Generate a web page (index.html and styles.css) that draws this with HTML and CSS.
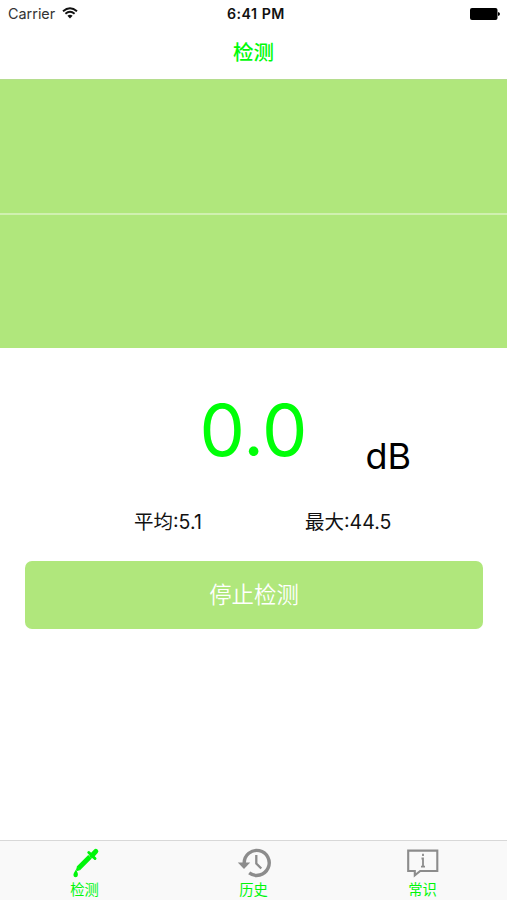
FILE: index.html
```html
<!DOCTYPE html>
<html lang="zh-CN">
<head>
<meta charset="utf-8">
<title>检测</title>
<link rel="stylesheet" href="styles.css">
</head>
<body>
<div class="app">
  <header class="header">
    <div class="status">
      <div class="carrier">Carrier
        <svg class="wifi" width="16" height="12" viewBox="0 0 16 12"><path d="M1 4.2Q8-1.7 15 4.2M3.4 6.8Q8 2.9 12.6 6.8" fill="none" stroke="#111" stroke-width="1.9"/><path d="M5.4 8.8Q8 6.7 10.6 8.8L8 11.5Z" fill="#111"/></svg>
      </div>
      <div class="time">6:41 PM</div>
      <svg class="battery" width="30" height="12" viewBox="0 0 30 12"><rect width="27.5" height="12" rx="2"/><path d="M28 4q2 .3 2 2t-2 2z"/></svg>
    </div>
    <h1 class="title">检测</h1>
  </header>
  <section class="chart"><div class="half"></div><div class="half"></div></section>
  <main class="main">
    <div class="reading"><span class="value">0.0</span><span class="unit">dB</span></div>
    <div class="stats"><span class="stat">平均:5.1</span><span class="stat">最大:44.5</span></div>
    <button class="stop">停止检测</button>
  </main>
  <nav class="tabs">
    <a class="tab">
      <svg class="icon" width="34" height="32" viewBox="0 0 34 32"><g fill="none" stroke="#00f60a"><path d="M10.5 21.3 22 9.8" stroke-width="5"/><path d="M20.8 5.5 27 11.5" stroke-width="3" stroke-linecap="round"/><path d="M24 8.5 27.8 4.4" stroke-width="5" stroke-linecap="round"/></g><path d="M9 19.3 12.5 23 9.3 24 8 23Z" fill="#00f60a"/><path d="M8 22.6Q10 26 9.9 28 9.6 30.2 7.6 30.2T5.4 28Q5.6 26 8 22.6Z" fill="#00f60a"/></svg>
      <span>检测</span>
    </a>
    <a class="tab">
      <svg class="icon" width="34" height="32" viewBox="0 0 34 32"><path d="M7.2 16A12.5 12.5 0 1 1 12.2 25.9" fill="none" stroke="#8c8c8c" stroke-width="3.4"/><path d="M.8 15.5H13.2L7 22Z" fill="#8c8c8c"/><path d="M19.3 8V16.5L24.3 21.5" fill="none" stroke="#8c8c8c" stroke-width="2.3"/></svg>
      <span>历史</span>
    </a>
    <a class="tab">
      <svg class="icon" width="34" height="32" viewBox="0 0 34 32"><path d="M2.2 3.6H31.3V24H14.2L8.8 28.4V24H2.2Z" fill="none" stroke="#8c8c8c" stroke-width="2.1"/><path d="M17 6.8V9M15.5 11.5H17V19.5M15 19.7H19" fill="none" stroke="#8c8c8c" stroke-width="1.8"/></svg>
      <span>常识</span>
    </a>
  </nav>
</div>
</body>
</html>
```
FILE: styles.css
```css
* { box-sizing: border-box; }
body {
  margin: 0;
  background: #fff;
  font-family: Inter, "Noto Sans CJK SC", sans-serif;
  color: #111;
}
.app { height: 900px; display: flex; flex-direction: column; overflow: hidden; }
.header { height: 80px; border-bottom: 1px solid #b5dd8e; }
.status {
  height: 28px;
  padding: 0 7px 0 8px;
  display: grid;
  grid-template-columns: 219px auto 1fr;
  align-items: center;
}
.carrier { display: flex; align-items: center; gap: 7px; height: 20px; margin-top: -2px; font-size: 14.4px; color: #333; }
.wifi { margin-top: -1px; }
.time { font-size: 14.2px; font-weight: 600; letter-spacing: 0.5px; white-space: nowrap; margin-top: -2px; }
.battery { justify-self: end; margin-top: -1px; }
.title {
  margin: 0;
  height: 50px;
  line-height: 50px;
  text-align: center;
  font-size: 20.5px;
  font-weight: 500;
  color: #00fa0a;
}
.chart { height: 268px; display: flex; flex-direction: column; gap: 2px; background: #d0f0b0; }
.half { flex: 1; background: #b0e77c; }
.main { flex: 1; padding: 0 25px; }
.reading {
  height: 153px;
  display: grid;
  grid-template-columns: 1fr auto 1fr;
  align-items: baseline;
  padding-top: 38px;
}
.value { grid-column: 2; font-size: 72px; line-height: 87px; color: #00ff08; }
.unit { font-size: 36px; line-height: 44px; padding-left: 58px; color: #000; position: relative; top: 13px; }
.stats { height: 60px; display: flex; line-height: 42px; font-size: 19.5px; }
.stat:first-child { width: 171px; margin-left: 109px; }
.stop {
  display: block;
  width: 458px;
  height: 68px;
  border: 0;
  border-radius: 7px;
  background: #b0e77c;
  color: #fff;
  font: 350 22.4px/68px Inter, "Noto Sans CJK SC", sans-serif;
  padding: 0;
}
.tabs {
  height: 60px;
  border-top: 1px solid #d8d8d8;
  background: #f9f9f9;
  display: grid;
  grid-template-columns: repeat(3, 1fr);
}
.tab {
  display: flex;
  flex-direction: column;
  align-items: center;
  padding-top: 6px;
  font-size: 14.3px;
  line-height: 22px;
  color: #00f60a;
}
.icon { display: block; }
```
